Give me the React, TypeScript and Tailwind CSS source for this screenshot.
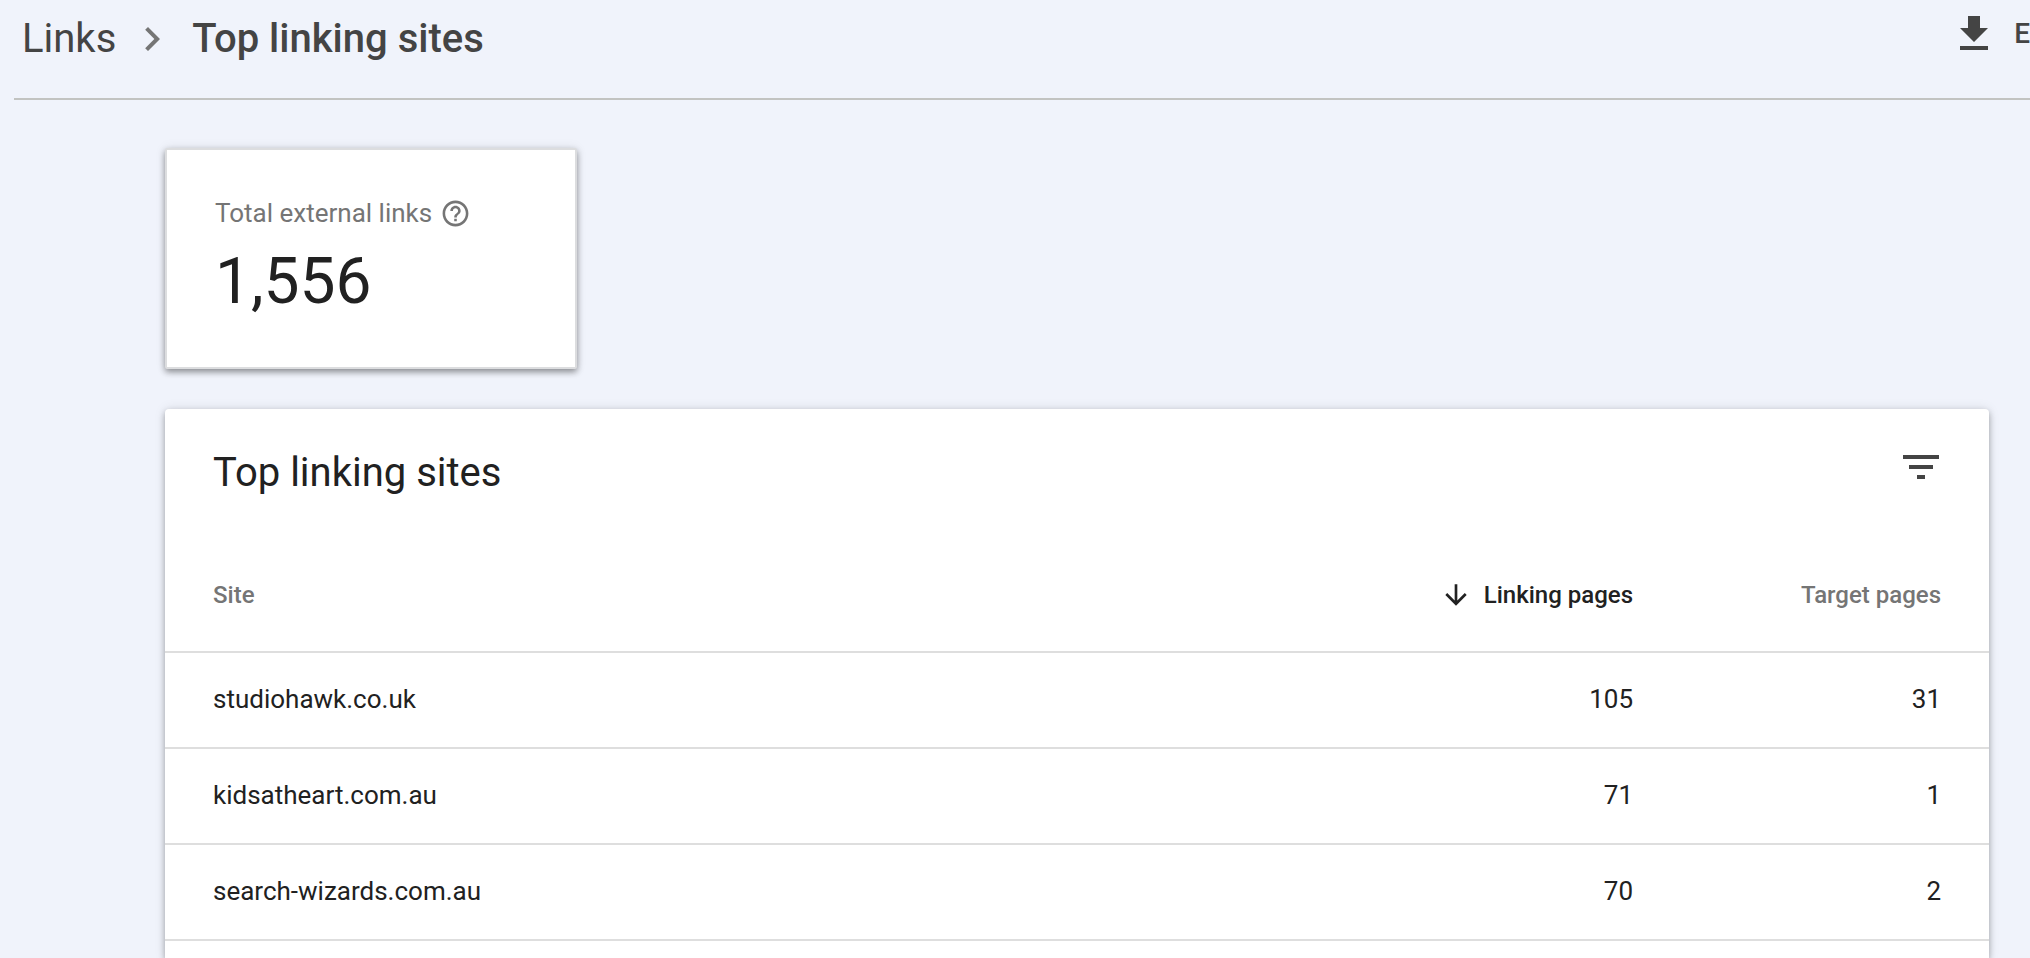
import { MdArrowDownward, MdChevronRight, MdFileDownload, MdFilterList, MdHelpOutline } from 'react-icons/md';

const sites = [
  { site: 'studiohawk.co.uk', linking: 105, target: 31 },
  { site: 'kidsatheart.com.au', linking: 71, target: 1 },
  { site: 'search-wizards.com.au', linking: 70, target: 2 },
];

function Header() {
  return (
    <header className="ml-[14px] h-[100px] flex items-start justify-between border-b-2 border-[#c2c3c1] text-[#444444]">
      <nav aria-label="Breadcrumb" className="h-[78px] pl-2 flex items-center text-[40px]">
        <a href="#links">Links</a>
        <MdChevronRight size={48} className="ml-3 mr-4 text-[#757575]" />
        <h1 className="font-medium">Top linking sites</h1>
      </nav>
      <button aria-label="Export" className="h-[68px] flex items-center gap-4 text-[28px] font-medium">
        <MdFileDownload size={48} />
        E
      </button>
    </header>
  );
}

function TotalCard() {
  return (
    <section className="w-[412px] px-12 py-[47px] bg-white border-2 border-[#dcdddf] rounded-xs shadow-[0_3px_6px_rgba(0,0,0,0.4),0_0_12px_rgba(0,0,0,0.08)]">
      <div className="flex items-center gap-2 text-[26px] leading-8 text-[#757575]">
        <span>Total external links</span>
        <button aria-label="About total external links">
          <MdHelpOutline size={31} />
        </button>
      </div>
      <p className="mt-[15px] text-[64px] leading-[76px]">1,556</p>
    </section>
  );
}

function SitesTable() {
  return (
    <table className="w-full text-[26px]">
      <thead className="text-[24px] text-[#757575]">
        <tr className="h-[114px] border-b-2 border-[#dedede]">
          <th scope="col" className="pl-12 text-left font-medium">Site</th>
          <th scope="col" className="font-medium text-[#212121]">
            <button className="ml-auto flex items-center gap-3">
              <MdArrowDownward size={32} />
              Linking pages
            </button>
          </th>
          <th scope="col" className="w-[356px] pr-12 text-right font-medium">Target pages</th>
        </tr>
      </thead>
      <tbody>
        {sites.map((row) => (
          <tr key={row.site} className="h-24 border-b-2 border-[#dedede]">
            <td className="pb-[2px] pl-12">{row.site}</td>
            <td className="pb-[2px] text-right">{row.linking}</td>
            <td className="pb-[2px] pr-12 text-right">{row.target}</td>
          </tr>
        ))}
      </tbody>
    </table>
  );
}

export default function App() {
  return (
    <div className="min-h-screen flex flex-col bg-[#f0f3fb] font-['Roboto',sans-serif] text-[#212121]">
      <Header />
      <main className="grow flex flex-col gap-10 pt-12 pl-[165px] pr-[41px]">
        <TotalCard />
        <section className="grow bg-white rounded-t-sm shadow-[0_3px_6px_rgba(0,0,0,0.3),0_0_12px_rgba(0,0,0,0.1)]">
          <div className="h-[129px] pt-[34px] pl-12 pr-11 flex items-start justify-between">
            <h2 className="text-[40px] leading-[60px]">Top linking sites</h2>
            <button aria-label="Filter" className="text-[#444444]">
              <MdFilterList size={48} />
            </button>
          </div>
          <SitesTable />
        </section>
      </main>
    </div>
  );
}
